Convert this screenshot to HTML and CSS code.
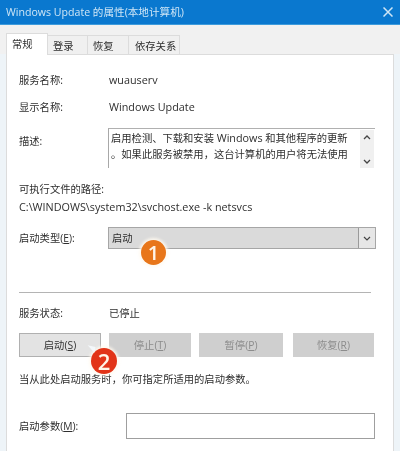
FILE: index.html
```html
<!DOCTYPE html>
<html lang="zh-CN">
<head>
<meta charset="utf-8">
<title>Windows Update 的属性(本地计算机)</title>
<link rel="stylesheet" href="styles.css">
</head>
<body>
<div class="window">
  <header class="titlebar">
    <span class="title">Windows Update 的属性(本地计算机)</span>
    <svg class="close" viewBox="0 0 10 10" width="10" height="10"><path d="M.5.5l9 9M9.500.5l-9 9" stroke="#cfe6f6" stroke-width="1.500" fill="none"/></svg>
  </header>
  <div class="body">
    <nav class="tabs">
      <span class="tab active">常规</span><span class="tab tab-login">登录</span><span class="tab tab-recover">恢复</span><span class="tab tab-deps">依存关系</span>
    </nav>
    <main class="panel">
      <div class="row row-name"><span class="label">服务名称:</span><span class="value latin">wuauserv</span></div>
      <div class="row row-display"><span class="label">显示名称:</span><span class="value latin">Windows Update</span></div>
      <div class="row row-desc">
        <span class="label desc-label">描述:</span>
        <div class="desc">
          <div class="desc-text">启用检测、下载和安装 <span class="latin">Windows</span> 和其他程序的更新<br>。如果此服务被禁用，这台计算机的用户将无法使用</div>
          <div class="scroll">
            <svg viewBox="0 0 8 5" width="8" height="5"><path d="M1 4l3-3 3 3" stroke="#444" stroke-width="1.300" fill="none"/></svg>
            <svg viewBox="0 0 8 5" width="8" height="5"><path d="M1 1l3 3 3-3" stroke="#444" stroke-width="1.300" fill="none"/></svg>
          </div>
        </div>
      </div>
      <div class="path-label">可执行文件的路径:</div>
      <div class="path latin">C:\WINDOWS\system32\svchost.exe -k netsvcs</div>
      <div class="row row-type">
        <span class="label">启动类型(<u>E</u>):</span>
        <div class="select">
          <span class="select-value">启动</span>
          <span class="select-arrow"><svg viewBox="0 0 8 5" width="8" height="5"><path d="M1 1l3 3 3-3" stroke="#444" stroke-width="1.200" fill="none"/></svg></span>
          <span class="badge badge-one">1</span>
        </div>
      </div>
      <hr class="rule">
      <div class="row row-status"><span class="label">服务状态:</span><span class="value">已停止</span></div>
      <div class="buttons">
        <button class="btn btn-start">启动(<u>S</u>)<span class="badge badge-two">2</span></button>
        <button class="btn off">停止(<u>T</u>)</button>
        <button class="btn off btn-wide">暂停(<u>P</u>)</button>
        <button class="btn off btn-last">恢复(<u>R</u>)</button>
      </div>
      <p class="note">当从此处启动服务时，你可指定所适用的启动参数。</p>
      <div class="row row-param">
        <span class="label param-label">启动参数(<u>M</u>):</span>
        <div class="input"></div>
      </div>
    </main>
  </div>
</div>
</body>
</html>
```
FILE: styles.css
```css
* { box-sizing: border-box; }
html, body { margin: 0; padding: 0; }
body {
  width: 400px;
  height: 451px;
  overflow: hidden;
  background: #eaf3f8;
  color: #2e2e2e;
  font: 10.300px/14px "Open Sans", "Noto Sans CJK SC", sans-serif;
}
.window { width: 400px; height: 451px; display: flex; flex-direction: column; filter: blur(.3px); }
.latin { font-size: 10.800px; }
.title { font-size: 10.600px; }
.titlebar {
  height: 25px;
  flex: none;
  background: #0a78cf;
  border-bottom: 1px solid #3d9bdc;
  color: #cfe6f6;
  padding: 0 7px 0 6px;
  display: flex;
  align-items: center;
  justify-content: space-between;
}
.body {
  flex: 1;
  min-height: 0;
  padding: 8px 6px 0;
  background: linear-gradient(#f1f1f1 0, #f1f1f1 29px, #eef4f8 29px);
}
.tabs { height: 21px; display: flex; align-items: flex-end; position: relative; z-index: 1; }
.tab {
  height: 19px;
  padding: 3px 0 0 5px;
  background: #f0f0f0;
  border: 1px solid #dcdcdc;
  border-left: 0;
  border-bottom: 0;
  white-space: nowrap;
}
.tab-login { width: 40px; }
.tab-recover { width: 41px; }
.tab-deps { width: 51px; padding-left: 6px; }
.tab.active {
  height: 22px;
  width: 42px;
  background: #fff;
  border-left: 1px solid #dcdcdc;
  margin-bottom: -1px;
}
.panel {
  height: 397px;
  background: #fff;
  border: 1px solid #dcdcdc;
  border-bottom: 0;
  padding: 0 17px 0 12px;
}
.row { display: flex; align-items: center; }
.label { width: 89px; flex: none; }
.value { padding-left: 1px; }
.row-name { margin-top: 18px; height: 14px; }
.row-display { margin-top: 13px; height: 14px; }
.row-desc { margin-top: 14px; align-items: flex-start; }
.desc-label { margin-top: 6px; }
.desc {
  width: 267px;
  height: 40px;
  display: flex;
  padding-right: 1px;
  border-left: 1px solid #a8a8a8;
  border-top: 1px solid #b0b0b0;
}
.desc-text { flex: 1; padding: 1px 0 0 2px; line-height: 16px; white-space: nowrap; overflow: hidden; }
.scroll {
  width: 14px;
  flex: none;
  margin-top: 1px;
  background: #f0f0f0;
  display: flex;
  flex-direction: column;
  justify-content: space-between;
  align-items: center;
  padding: 5px 0 4px;
}
.path-label { margin-top: 14px; }
.path { margin-top: 4px; white-space: nowrap; }
.row-type { margin-top: 13px; }
.select {
  position: relative;
  width: 268px;
  height: 22px;
  background: #dadada;
  border: 1px solid #a6a6a6;
  display: flex;
  align-items: center;
  justify-content: space-between;
}
.select-value { padding-left: 3px; }
.select-arrow {
  width: 17px;
  height: 20px;
  background: #e6e6e6;
  border-left: 1px solid #9a9a9a;
  display: flex;
  align-items: center;
  justify-content: center;
}
.badge {
  position: absolute;
  border-radius: 50%;
  color: #fff5e8;
  font-family: "Open Sans", "Liberation Sans", sans-serif;
  font-weight: 600;
  display: flex;
  align-items: center;
  justify-content: center;
  box-shadow: 0 0 3px 2px rgba(255,250,240,.9);
}
.badge::before {
  content: "";
  position: absolute;
  left: -4px;
  top: -2px;
  border-style: solid;
  border-width: 6px 0 0 8px;
  border-color: #f4f8fb transparent transparent transparent;
  transform: rotate(12deg);
  z-index: -1;
}
.badge-one {
  left: 32px;
  top: 12px;
  width: 25px;
  height: 25px;
  background: #e8761a;
  font-size: 20px;
}
.rule { margin: 43px 5px 0 0; border: 0; border-top: 1px solid #b4b4b4; height: 0; }
.row-status { margin-top: 13px; height: 14px; }
.buttons { display: flex; margin-top: 13px; gap: 8px; }
.btn {
  position: relative;
  width: 82px;
  height: 24px;
  padding: 0;
  font: inherit;
  color: #333;
  background: #e3e3e3;
  border: 1px solid #b0b0b0;
}
.btn.off { background: #cfcfcf; border-color: #cfcfcf; color: #8c8c8c; }
.btn-wide { width: 84px; margin-right: 2px; }
.btn-last { width: 81px; }
.badge-two {
  left: 71px;
  top: 14px;
  width: 26px;
  height: 26px;
  background: #e23418;
  font-size: 22px;
  z-index: 2;
}
.note { margin: 15px 0 0; white-space: nowrap; }
.row-param { margin-top: 27px; }
.param-label { width: 107px; }
.input { width: 249px; height: 26px; background: #fff; border: 1px solid #9f9f9f; }
```
